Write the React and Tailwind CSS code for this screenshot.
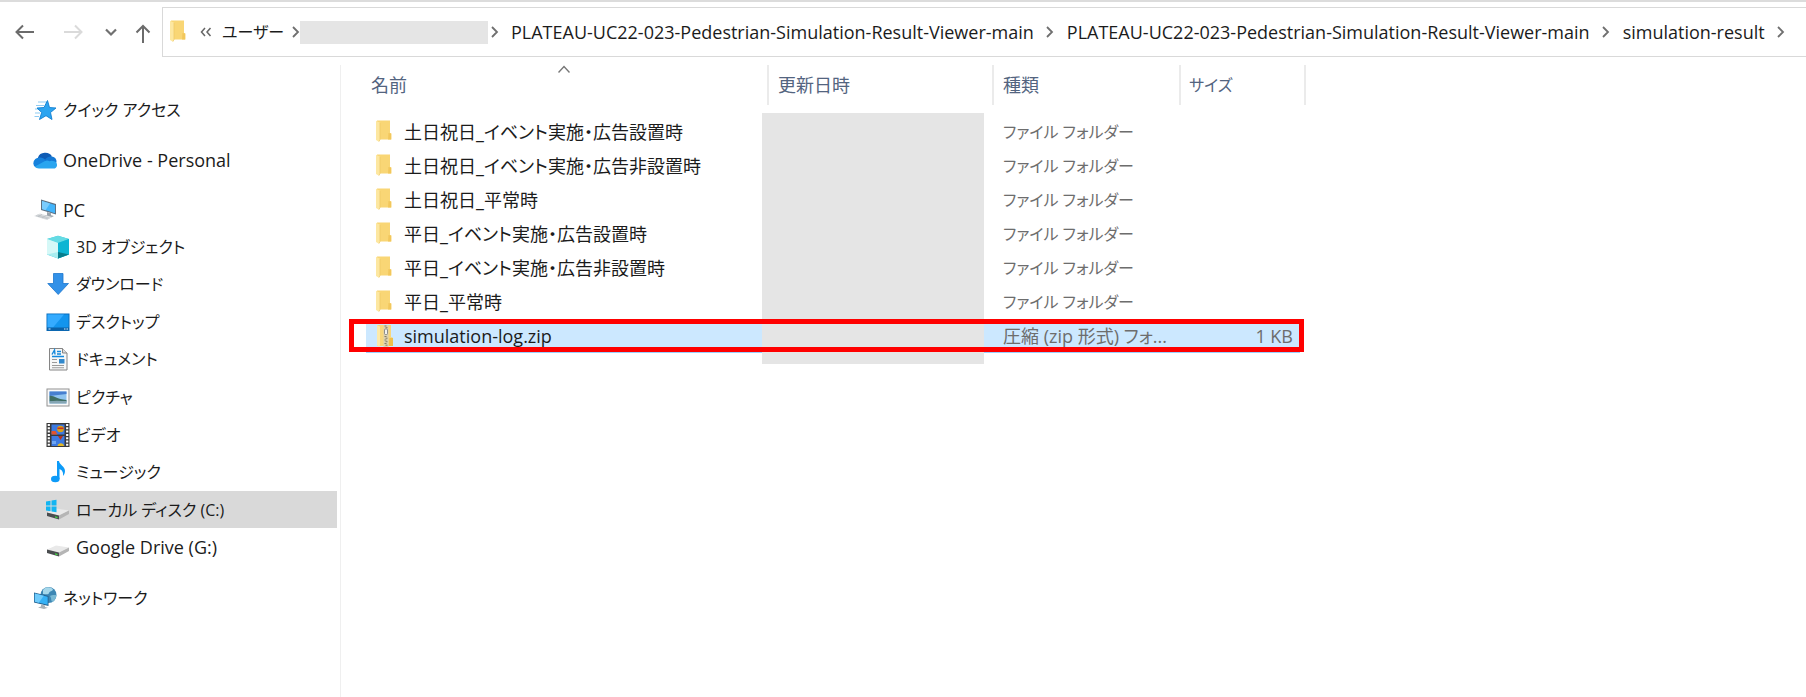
import React from "react";

function Chevron() {
  return (
    <svg className="h-4 w-2 shrink-0" viewBox="0 0 8 16" fill="none" stroke="#6f6f6f" strokeWidth="1.8" aria-hidden="true">
      <path d="M1 3l5 5-5 5" />
    </svg>
  );
}

function FolderIcon() {
  return (
    <svg className="h-6 w-4 shrink-0" viewBox="0 0 16 24" aria-hidden="true">
      <path d="M1 .5h13V13l1.500.6V19.500H1z" fill="#f9d675" />
      <path d="M12.500 13l2.500.5V19.500H12z" fill="#f2c75c" />
      <path d="M0 .8L4 2.800V19.500L3 21.800 0 20z" fill="#fde7a0" />
      <path d="M4 3v16.500l-1 2" fill="none" stroke="#ecc763" strokeWidth=".7" />
    </svg>
  );
}

function ZipIcon() {
  return (
    <svg className="h-6 w-[18px] shrink-0" viewBox="0 0 18 24" aria-hidden="true">
      <path d="M1 1h14v12l2 .7V22H1z" fill="#f8d77c" />
      <path d="M1 1l3 1.500V20.500L3.500 23 1 21.500z" fill="#fdeaa9" />
      <path d="M13.500 14l3.500 0v8h-4.500z" fill="#eebf4c" />
      <rect x="7.500" y="1" width="5" height="22" fill="#ddd2b0" />
      <path d="M8.500 2h2M9.500 3.700h2M8.500 12.500h2M9.500 14.200h2M8.500 16h2M9.500 17.700h2M8.500 19.500h2M9.500 21.200h2" stroke="#857c66" strokeWidth="1" />
      <rect x="8.500" y="5" width="3" height="5.500" rx="1" fill="#f2f2ee" stroke="#777" strokeWidth=".8" />
    </svg>
  );
}

function Icon({ children }) {
  return (
    <svg className="size-6 shrink-0" viewBox="0 0 24 24" aria-hidden="true">
      {children}
    </svg>
  );
}

function Drive() {
  return (
    <>
      <path d="M1 14.500L10 10.500 23 12.500 13 17.500z" fill="#e9e9e9" />
      <path d="M1 14.500l12 3v4L1 18z" fill="#4a4d4f" />
      <path d="M13 17.500l10-5v3.500l-10 5.500z" fill="#b5b5b5" />
      <path d="M9 18.300l2.500.7v1.200L9 19.500z" fill="#3fdc3f" />
    </>
  );
}

const icons = {
  star: (
    <>
      <path d="M5 4h9M3 7.500h8M2 11h6M2 15h5M1.500 18.500H6" stroke="#8ecbf2" strokeWidth="1.200" />
      <path d="M14.500 2.500l2 7 6.500.500-5.500 4.500 1.500 7-6-3.800L6.500 21.500l2.200-7L4 10l7-.500z" fill="#2ba4f0" stroke="#137fd0" strokeWidth=".9" />
    </>
  ),
  cloud: (
    <>
      <path d="M5 9.500A7.500 6.500 0 0119 8.500c-2 .5-4 2-5 4L5 16z" fill="#0f5cb5" />
      <path d="M.3 15.500A6 6 0 017 9.500c2.500 0 4 1 5.500 2.500L16 16 3 19.500A4.500 4.500 0 01.3 15.500z" fill="#1681dc" />
      <path d="M19 8.600a5.600 5.600 0 014.500 6l-6 2-6-4c1.500-3 4.500-4.500 7.500-4z" fill="#1478d4" />
      <path d="M2 18.500L12 13c2-1 3-.5 4.500.3 2-1.300 5.500-.3 7 1.700 1.500 3-.5 5.500-3 5.500H6c-2 0-3.300-.8-4-2z" fill="#2aa5ef" />
    </>
  ),
  pc: (
    <>
      <path d="M8 1.500l15 4.500v10.500L8 12z" fill="#5d7183" />
      <path d="M9 3l13 4v8.200L9 11z" fill="#42b4fb" />
      <path d="M9 3l8 2.500-4.500 6.700L9 11z" fill="#7accfd" />
      <path d="M14 14l4 1.200v2l3 .8-3 1.500-6-1.500 2-1z" fill="#9aa3aa" />
      <path d="M7 15.500l12 3.500-5 3L1 18z" fill="#dcdfe1" />
      <path d="M4.500 17l12 3.200M3 17.700l12 3.200M9 16.300l-4 2.500M13 17.500l-4 2.500" stroke="#b6bbbf" strokeWidth=".6" />
    </>
  ),
  cube: (
    <>
      <path d="M12 .8l11 3.200v15.500L12 23.500 1 19.500V4z" fill="#33c6d6" />
      <path d="M12 .8L23 4l-11 4L1 4z" fill="#65dbe4" />
      <path d="M1 4l11 4v15.500L1 19.500z" fill="#a8edf0" />
      <path d="M1 4l11 4v9L1 19.500z" fill="#d5f8f7" />
      <path d="M12 8l11-4v15.500L12 23.500z" fill="#0db5d3" />
      <path d="M12 17l11 2.500-11 4z" fill="#087d8c" />
    </>
  ),
  download: <path d="M7.500 1.500h9.500v10h5.500L12.200 22.500 1.800 11.500h5.700z" fill="#3291e8" stroke="#1d76cd" strokeWidth=".8" />,
  desktop: (
    <>
      <rect x="1" y="4" width="22" height="16.500" fill="#1395ee" stroke="#0b6dbb" />
      <path d="M1.500 4.500H18L7 17.500H1.500z" fill="#35abff" />
      <rect x="1" y="17.500" width="22" height="3" fill="#0c62a8" />
      <path d="M2.500 19h2M18 19h1.500M20.500 19H22" stroke="#d9efff" strokeWidth="1.200" />
    </>
  ),
  document: (
    <>
      <path d="M3.500 1.500h13L21 6v17H3.500z" fill="#f7f8f8" stroke="#858585" />
      <path d="M16.500 1.500V6H21" fill="#dedede" stroke="#858585" />
      <path d="M6 7.500L8.500 3l.5 4.500M11 4.500h4M11 7h4M6 9.500h12" fill="none" stroke="#1489dc" strokeWidth="1.400" />
      <path d="M6 12.500h5M6 15.500h5M6 18.500h12M6 20.700h12" stroke="#9a9a9a" strokeWidth="1.100" />
      <rect x="13" y="12" width="5.500" height="4.500" fill="#3188cc" />
    </>
  ),
  picture: (
    <>
      <rect x="1" y="4" width="22" height="17" fill="#fafafa" stroke="#929292" />
      <rect x="3.500" y="6.500" width="17" height="12" fill="#8fc4f0" />
      <path d="M3.500 6.500h17v2.500l-17 2z" fill="#477fd0" />
      <path d="M3.500 11c4-1 6 3 17 4v1.500h-17z" fill="#3f6e64" />
      <path d="M3.500 16.500c6-1.500 11-.5 17-.5v2.500h-17z" fill="#85a6b4" />
    </>
  ),
  video: (
    <>
      <rect x=".5" y="0" width="23" height="24" fill="#3a3a3a" />
      <path d="M2.800 1v22M21.200 1v22" stroke="#fff" strokeWidth="2.200" strokeDasharray="2 1.300" />
      <rect x="5.500" y="1.500" width="13" height="10" fill="#3c79e0" />
      <rect x="5.500" y="13" width="13" height="10" fill="#3c79e0" />
      <circle cx="14.500" cy="6" r="3.300" fill="#d8a116" />
      <path d="M11.500 4.500h6v1.600h-6z" fill="#c92f1e" />
      <path d="M5.500 8h4l2 3.500h-6z" fill="#e2542c" />
      <path d="M12 13h5l-2.500 4z" fill="#b3321d" />
      <path d="M11.500 23a3.300 3.300 0 016.500 0z" fill="#e5b923" />
      <path d="M6 18h4v3H6z" fill="#6ea6f3" />
    </>
  ),
  music: (
    <>
      <path d="M11 1h2c.3 4 6 5 6 10 0 2-1 4-2 5 .5-4-1-6-3.500-7v10H11z" fill="#0d9bf8" />
      <ellipse cx="9.300" cy="19" rx="4.300" ry="3.300" fill="#0d9bf8" />
    </>
  ),
  system: (
    <>
      <Drive />
      <path d="M0 3.500l4.500-.8v4.800H0zM5.500 2.500L10.500 1.700v5.800h-5zM0 8.500h4.500v4.800L0 12.500zM5.500 8.500h5v5.800l-5-.8z" fill="#12b5f2" />
    </>
  ),
  drive: <Drive />,
  network: (
    <>
      <circle cx="15.500" cy="9" r="8" fill="#3d87b4" />
      <path d="M10 4c3-4 8-3 10-.5-1 2.500-3 1-4 3.500s-4 .5-6 1z" fill="#a5d7ea" />
      <path d="M17 10c2-1.500 5-1 6.500-1-.3 3-2 6-4 7-2-1.500-.5-3-2.500-6z" fill="#79b9d4" />
      <path d="M1 6.500l14.500 3.500v10L1 16.500z" fill="#245f8c" />
      <path d="M1.800 7.600l12.900 3.200v8l-12.900-3z" fill="#35b1f5" />
      <path d="M1.800 7.600l9 2.200-5 7-4-1z" fill="#6fcbfb" />
      <path d="M8 18.500l4 1v1.500l3 .8-4 1.200-6-1.500 3-1z" fill="#a9b2b8" />
    </>
  ),
};

const pcItems = [
  ["cube", "3D オブジェクト"],
  ["download", "ダウンロード"],
  ["desktop", "デスクトップ"],
  ["document", "ドキュメント"],
  ["picture", "ピクチャ"],
  ["video", "ビデオ"],
  ["music", "ミュージック"],
  ["system", "ローカル ディスク (C:)"],
  ["drive", "Google Drive (G:)"],
];

function Label({ children }) {
  const hasKana = /[\u3040-\u30ff]/.test(children);
  return <span className={hasKana ? "text-base" : "text-lg"}>{children}</span>;
}

function RootItem({ icon, label }) {
  return (
    <a href="#" className="flex h-9 items-center gap-1.5 pl-[33px]">
      <Icon>{icons[icon]}</Icon>
      <Label>{label}</Label>
    </a>
  );
}

function Sidebar() {
  return (
    <nav aria-label="ナビゲーション" className="w-[341px] shrink-0 border-r border-[#efefef] pt-[27px] pr-[3px]">
      <RootItem icon="star" label="クイック アクセス" />
      <div className="mt-[14px]"><RootItem icon="cloud" label="OneDrive - Personal" /></div>
      <div className="mt-[14px]"><RootItem icon="pc" label="PC" /></div>
      <ul className="grid h-[338px] auto-rows-fr">
        {pcItems.map(([icon, label]) => (
          <li key={icon} className="grid">
            <a href="#" className={"flex items-center gap-1.5 pl-[46px] " + (icon === "system" ? "bg-[#d9d9d9]" : "")}>
              <Icon>{icons[icon]}</Icon>
              <Label>{label}</Label>
            </a>
          </li>
        ))}
      </ul>
      <div className="mt-[14px]"><RootItem icon="network" label="ネットワーク" /></div>
    </nav>
  );
}

const longName = "PLATEAU-UC22-023-Pedestrian-Simulation-Result-Viewer-main";

function AddressBar() {
  return (
    <header className="flex h-[57px] items-end border-t-2 border-[#dcdcdc] whitespace-nowrap">
      <div className="flex h-[50px] w-[162px] shrink-0 items-center">
        <button aria-label="戻る" className="ml-[15px]">
          <svg className="h-5 w-5" viewBox="0 0 20 20" fill="none" stroke="#6b6b6b" strokeWidth="2"><path d="M1 10h18M8 3.500L1.500 10 8 16.500" /></svg>
        </button>
        <button aria-label="進む" className="ml-7">
          <svg className="h-5 w-5" viewBox="0 0 20 20" fill="none" stroke="#dadada" strokeWidth="2"><path d="M1 10h18M12 3.500l6.500 6.500-6.500 6.500" /></svg>
        </button>
        <button aria-label="最近の場所" className="ml-[22px]">
          <svg className="h-5 w-3" viewBox="0 0 12 20" fill="none" stroke="#707070" strokeWidth="2.200"><path d="M1 7.500l5 5 5-5" /></svg>
        </button>
        <button aria-label="上へ" className="ml-[18px] pt-1">
          <svg className="h-5 w-4" viewBox="0 0 16 20" fill="none" stroke="#6b6b6b" strokeWidth="2"><path d="M8 19V2M1.500 8.500L8 2l6.500 6.500" /></svg>
        </button>
      </div>
      <div className="flex h-[50px] flex-1 items-center border border-r-0 border-[#d9d9d9] pl-[7px] text-lg text-[#1b1b1b]">
        <FolderIcon />
        <svg className="ml-[14px] h-4 w-3" viewBox="0 0 12 16" fill="none" stroke="#666" strokeWidth="1.500" aria-hidden="true"><path d="M5 4L1.500 8 5 12M10.500 4L7 8l3.500 4" /></svg>
        <a href="#" className="ml-[10px] w-[70px] text-base">ユーザー</a>
        <Chevron />
        <span className="mr-[3px] h-[23px] w-[188px] shrink-0 bg-[#e5e5e5]" />
        <Chevron />
        <a href="#" className="ml-3">{longName}</a>
        <span className="mr-[13px] ml-3"><Chevron /></span>
        <a href="#">{longName}</a>
        <span className="mr-[13px] ml-3"><Chevron /></span>
        <a href="#">simulation-result</a>
        <span className="mr-[13px] ml-3"><Chevron /></span>
      </div>
    </header>
  );
}

const folders = [
  "土日祝日_イベント実施・広告設置時",
  "土日祝日_イベント実施・広告非設置時",
  "土日祝日_平常時",
  "平日_イベント実施・広告設置時",
  "平日_イベント実施・広告非設置時",
  "平日_平常時",
];

function FileList() {
  return (
    <main className="min-w-0 flex-1 pl-[25px]">
      <div className="relative w-[940px]">
        <table className="w-full table-fixed border-separate border-spacing-0 text-left whitespace-nowrap">
          <colgroup>
            <col className="w-[403px]" />
            <col className="w-[225px]" />
            <col className="w-[187px]" />
            <col className="w-[119px]" />
            <col className="w-[6px]" />
          </colgroup>
          <thead>
            <tr className="h-10 text-lg text-[#53647f]">
              <th className="relative border-r-2 border-[#ebebeb] p-0 pl-[5px] font-normal">
                名前
                <svg className="absolute top-0 left-48 h-2 w-3" viewBox="0 0 12 8" fill="none" stroke="#777" strokeWidth="1.400" aria-hidden="true"><path d="M.5 7.500L6 1.500l5.500 6" /></svg>
              </th>
              <th className="border-r-2 border-[#ebebeb] p-0 pl-[9px] font-normal">更新日時</th>
              <th className="border-r-2 border-[#ebebeb] p-0 pl-[9px] font-normal">種類</th>
              <th className="p-0 pl-2 text-base font-normal">サイズ</th>
              <td className="border-r-2 border-[#ebebeb] p-0" />
            </tr>
            <tr className="h-[10px]"><td colSpan={5} className="p-0" /></tr>
          </thead>
          <tbody className="text-lg text-[#6d6d6d]">
            {folders.map((name) => (
              <tr key={name} className="h-[34px]">
                <td className="p-0 pl-[10px] text-[#1b1b1b]">
                  <div className="flex items-center gap-3"><FolderIcon /><span>{name}</span></div>
                </td>
                <td className="p-0" />
                <td className="p-0 pl-[9px] text-base">ファイル フォルダー</td>
                <td className="p-0" />
                <td className="p-0" />
              </tr>
            ))}
            <tr className="h-[34px]">
              <td className="border-y border-[#99d1ff] bg-[#cce8ff] p-0 pl-[10px] text-[#1b1b1b]">
                <div className="flex items-center gap-[10px]"><ZipIcon /><span>simulation-log.zip</span></div>
              </td>
              <td className="border-y border-[#99d1ff] bg-[#cce8ff] p-0" />
              <td className="border-y border-[#99d1ff] bg-[#cce8ff] p-0 pl-[9px]">圧縮 (zip 形式) フォ...</td>
              <td className="border-y border-[#99d1ff] bg-[#cce8ff] p-0 pr-[7px] text-right">1 KB</td>
              <td className="p-0" />
            </tr>
          </tbody>
        </table>
        <div className="absolute top-12 left-[396px] h-[251px] w-[222px] bg-[#e5e5e5]" />
        <div className="absolute top-[254px] -left-[17px] h-[33px] w-[955px] border-[5px] border-[#ff0000]" />
      </div>
    </main>
  );
}

export default function App() {
  return (
    <div
      lang="ja"
      className="flex min-h-screen flex-col overflow-hidden bg-white font-['Open_Sans','Noto_Sans_CJK_JP',sans-serif] leading-6 text-[#1b1b1b] [font-feature-settings:'palt']"
    >
      <AddressBar />
      <div className="flex flex-1 pt-2">
        <Sidebar />
        <FileList />
      </div>
    </div>
  );
}
